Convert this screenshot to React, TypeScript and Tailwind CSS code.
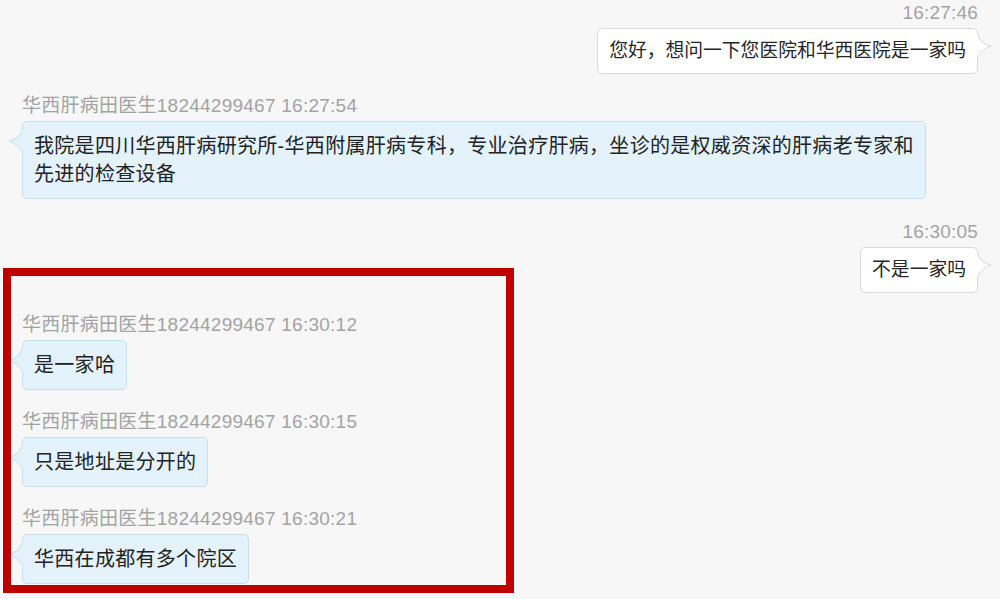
import React from 'react'

type Msg =
  | { side: 'right'; time: string; lines: string[] }
  | { side: 'left'; time: string; lines: string[] }

const SENDER = '华西肝病田医生18244299467'

const MESSAGES: Msg[] = [
  { side: 'right', time: '16:27:46', lines: ['您好，想问一下您医院和华西医院是一家吗'] },
  {
    side: 'left',
    time: '16:27:54',
    lines: [
      '我院是四川华西肝病研究所-华西附属肝病专科，专业治疗肝病，坐诊的是权威资深的肝病老专家和',
      '先进的检查设备',
    ],
  },
  { side: 'right', time: '16:30:05', lines: ['不是一家吗'] },
  { side: 'left', time: '16:30:12', lines: ['是一家哈'] },
  { side: 'left', time: '16:30:15', lines: ['只是地址是分开的'] },
  { side: 'left', time: '16:30:21', lines: ['华西在成都有多个院区'] },
]

const FONT = "font-['Liberation_Sans','Noto_Sans_CJK_SC',sans-serif]"

function LeftTail() {
  return (
    <svg className="absolute -left-[15px] top-[6px]" width="16" height="26" viewBox="0 0 16 26">
      <path d="M14.5,0 Q12.5,11 1,13 Q9,16 14.5,24 L16,24 L16,0 Z" fill="#e4f2fc" />
      <path d="M14.5,0 Q12.5,11 1,13 Q9,16 14.5,24" fill="none" stroke="#c4dff0" strokeWidth="1" />
    </svg>
  )
}

function RightTail() {
  return (
    <svg className="absolute -right-[15px] top-[4px]" width="16" height="26" viewBox="0 0 16 26">
      <path d="M1.5,0 Q3.5,11 15,13 Q7,16 1.5,24 L0,24 L0,0 Z" fill="#ffffff" />
      <path d="M1.5,0 Q3.5,11 15,13 Q7,16 1.5,24" fill="none" stroke="#dadada" strokeWidth="1" />
    </svg>
  )
}

export default function App() {
  return (
    <div className={`relative h-[599px] w-[1000px] overflow-hidden bg-[#f7f7f7] ${FONT}`}>
      <div className="flex flex-col px-[22px] pt-[1px]">
        {MESSAGES.map((m, i) =>
          m.side === 'right' ? (
            <div key={i} className={`flex flex-col items-end ${i === 0 ? '' : 'mt-[21px]'}`}>
              <div className="text-[19px] leading-[24px] tracking-[0.2px] text-[#a3a3a3]">{m.time}</div>
              <div className="relative mt-[3px] rounded-[5px] border border-[#dadada] bg-white px-[11px] py-[9px] text-[18.8px] leading-[26px] text-[#262626]">
                {m.lines.map((l, j) => (
                  <div key={j}>{l}</div>
                ))}
                <RightTail />
              </div>
            </div>
          ) : (
            <div key={i} className={`flex flex-col items-start ${i === 0 ? '' : 'mt-[20px]'}`}>
              <div className="text-[19px] leading-[24px] tracking-[0.25px] text-[#a3a3a3]">
                {SENDER} {m.time}
              </div>
              <div className="relative mt-[3px] rounded-[5px] border border-[#c4dff0] bg-[#e4f2fc] px-[11px] py-[10px] text-[20px] leading-[28px] tracking-[0.3px] text-[#222]">
                {m.lines.map((l, j) => (
                  <div key={j} className="whitespace-nowrap">
                    {l}
                  </div>
                ))}
                <LeftTail />
              </div>
            </div>
          )
        )}
      </div>

      {/* annotation box */}
      <div className="pointer-events-none absolute left-[3px] top-[268px] h-[325px] w-[511px] border-[8px] border-[#c00000]" />
    </div>
  )
}
